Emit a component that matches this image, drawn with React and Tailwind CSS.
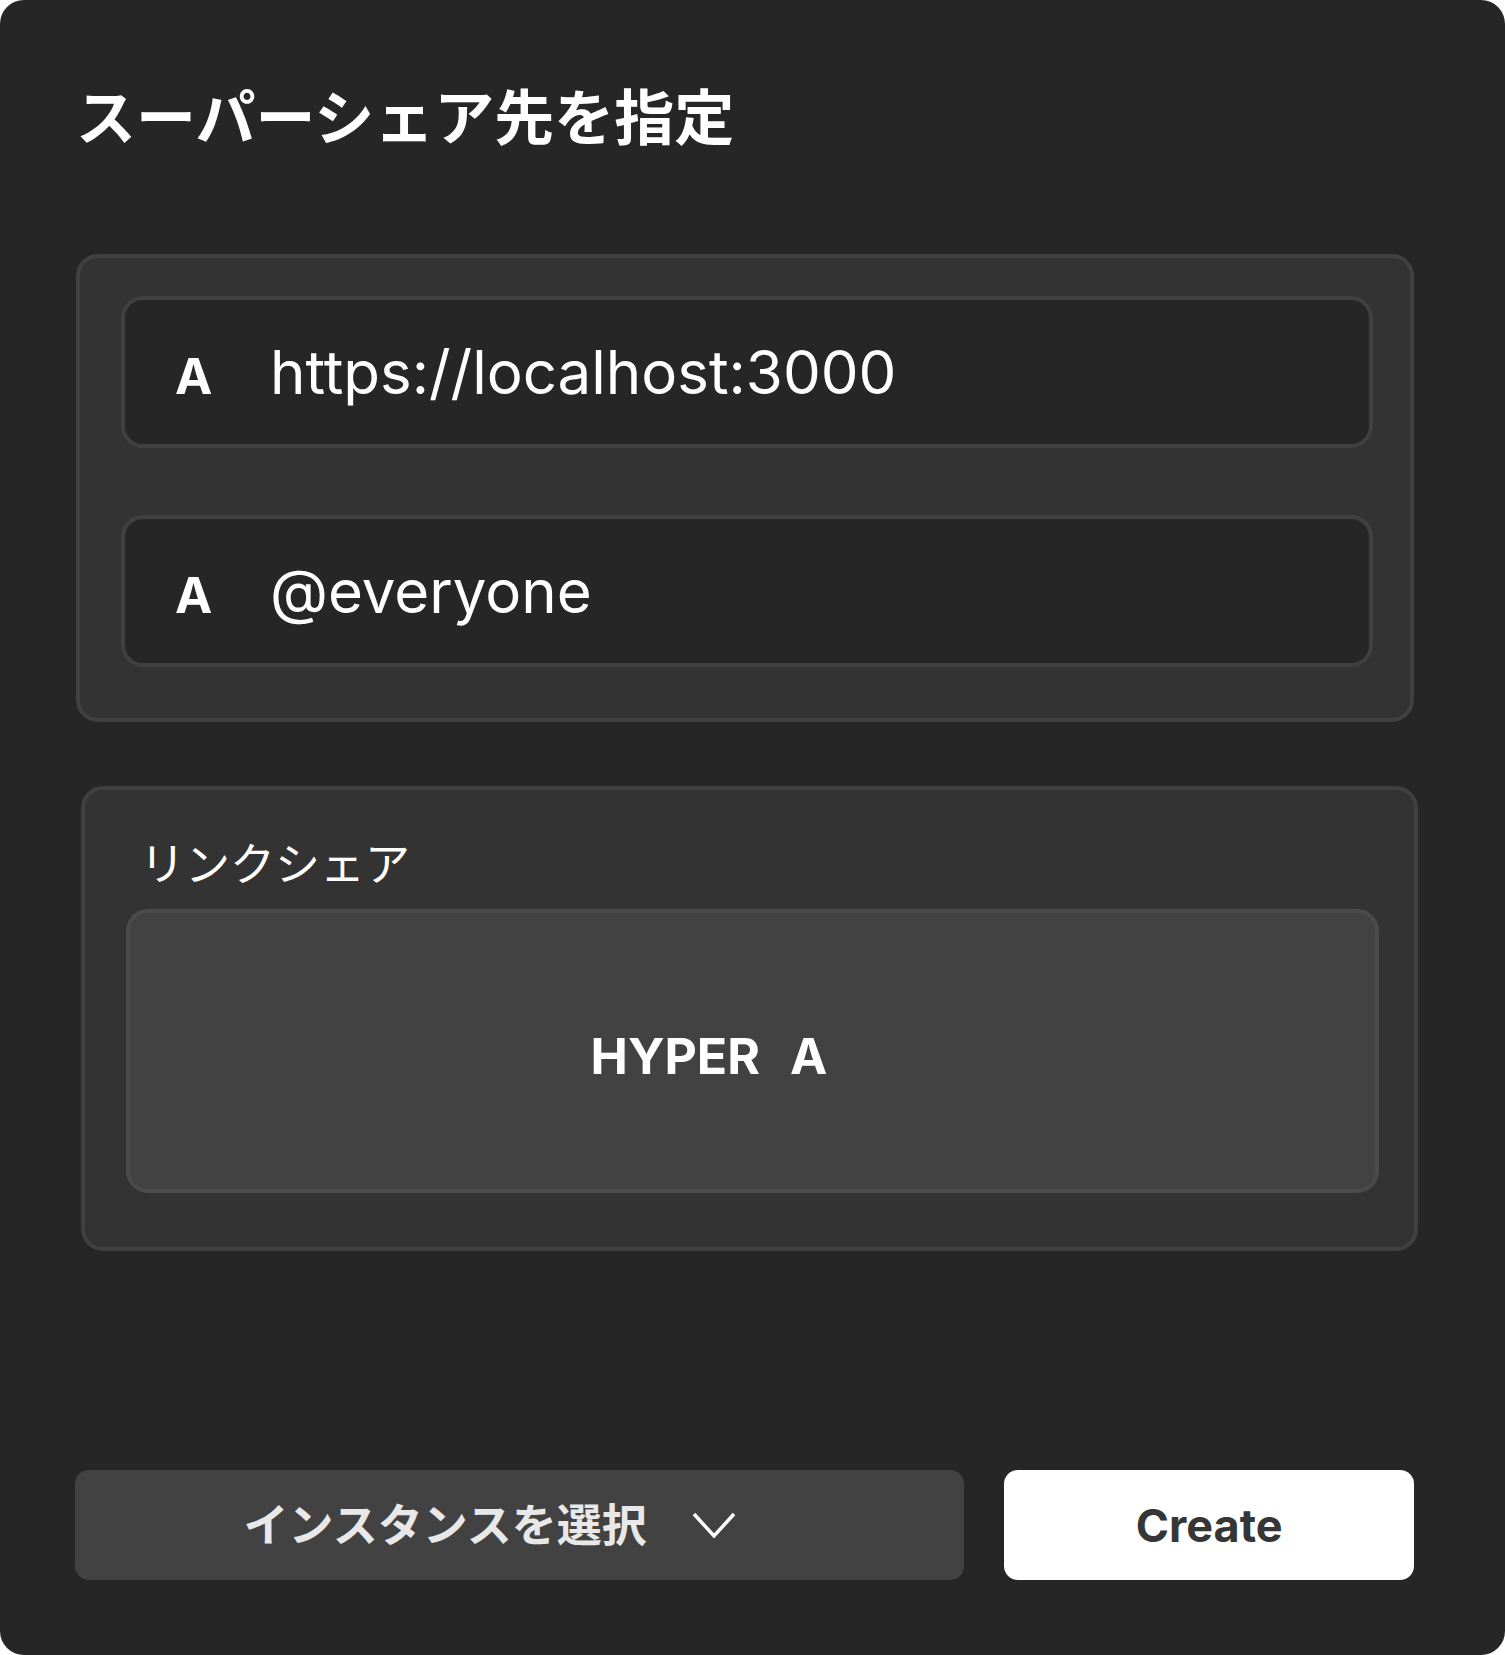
import React from 'react';

const font = 'font-["Inter","Noto_Sans_CJK_JP",sans-serif]';

function AddressRow({ value }) {
  return (
    <div className="flex h-[152px] items-center rounded-[22px] border-4 border-[#404040] bg-[#262626] pl-[50px]">
      <div className="flex items-baseline">
        <span className="w-[95px] text-[50px] font-bold leading-none text-white">A</span>
        <span className="text-[60px] leading-none text-white">{value}</span>
      </div>
    </div>
  );
}

export default function App() {
  return (
    <div className="min-h-screen bg-white">
      <div className={`${font} flex h-[1655px] w-[1505px] flex-col rounded-[24px] bg-[#262626] pb-[75px] pl-[76px] pr-[91px] pt-[88px]`}>
        {/* Title */}
        <h1 className="text-[60px] font-bold leading-none text-white">スーパーシェア先を指定</h1>

        {/* Targets */}
        <div className="mt-[106px] flex flex-col gap-[67px] rounded-[22px] border-4 border-[#404040] bg-[#333333] pb-[51px] pl-[41px] pr-[37px] pt-[38px]">
          <AddressRow value="https://localhost:3000" />
          <AddressRow value="@everyone" />
        </div>

        {/* Link share */}
        <div className="ml-[5px] mt-[64px] w-[1337px] rounded-[22px] border-4 border-[#404040] bg-[#333333] pb-[54px] pl-[41px] pr-[35px] pt-[52px]">
          <p className="pl-[14px] text-[45px] leading-none text-white">リンクシェア</p>
          <div className="mt-[22px] flex h-[284px] items-center justify-center gap-[30px] rounded-[22px] border-4 border-[#4b4b4b] bg-[#424242] pr-[87px] pt-[10px]">
            <span className="text-[50px] font-bold leading-none text-white">HYPER</span>
            <span className="text-[50px] font-bold leading-none text-white">A</span>
          </div>
        </div>

        {/* Actions */}
        <div className="-ml-[1px] mt-auto flex gap-[40px]">
          <button className="flex h-[110px] w-[890px] items-center justify-center gap-[44px] rounded-[14px] bg-[#424242] pr-[59px]">
            <span className="text-[45px] font-bold leading-none text-[#e8e8e8]">インスタンスを選択</span>
            <svg width="46" height="28" viewBox="0 0 46 28" fill="none">
              <polyline points="3,3 23,25 43,3" stroke="#ffffff" strokeWidth="3.5" />
            </svg>
          </button>
          <button className="flex h-[110px] w-[410px] items-center justify-center rounded-[14px] bg-white">
            <span className="text-[45px] font-bold leading-none text-[#363636]">Create</span>
          </button>
        </div>
      </div>
    </div>
  );
}
